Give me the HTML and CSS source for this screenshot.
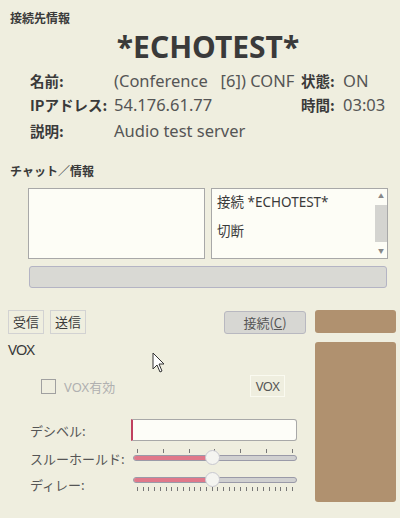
FILE: index.html
```html
<!DOCTYPE html>
<html lang="ja">
<head>
<meta charset="utf-8">
<link rel="stylesheet" href="styles.css">
</head>
<body>
<div class="page">
  <div class="sec-title t1">接続先情報</div>
  <div class="big-title">*ECHOTEST*</div>
  <div class="info">
    <div class="lbl">名前:</div><div class="val pre">(Conference   [6]) CONF</div><div class="lbl">状態:</div><div class="val">ON</div>
    <div class="lbl">IPアドレス:</div><div class="val">54.176.61.77</div><div class="lbl">時間:</div><div class="val">03:03</div>
    <div class="lbl">説明:</div><div class="val">Audio test server</div><div></div><div></div>
  </div>
  <div class="sec-title t2">チャット／情報</div>
  <div class="chat">
    <div class="box"></div>
    <div class="box log">
      <div class="log-text">
        <div class="line1">接続 *ECHOTEST*</div>
        <div class="line2">切断</div>
      </div>
      <div class="scroll">
        <div class="arr">▲</div>
        <div class="thumbbar"></div>
        <div class="arr">▼</div>
      </div>
    </div>
  </div>
  <div class="input-bar"></div>

  <div class="bottom">
    <div class="left">
      <div class="btn-row">
        <div class="tab">受信</div>
        <div class="tab">送信</div>
        <div class="spacer"></div>
        <div class="connect">接続(<u>C</u>)</div>
      </div>
      <div class="vox-title">VOX</div>
      <div class="vox-row">
        <div class="chk"></div>
        <div class="chk-lbl">VOX有効</div>
        <div class="spacer"></div>
        <div class="vox-btn">VOX</div>
      </div>
      <div class="form-row r-db">
        <div class="f-lbl">デシベル:</div>
        <div class="db-input"></div>
      </div>
      <div class="form-row r-th">
        <div class="f-lbl">スルーホールド:</div>
        <div class="slider-wrap">
          <div class="ticks top">
            <i></i><i></i><i></i><i></i><i></i><i></i><i></i>
          </div>
          <div class="slider">
            <div class="fill" style="width:48%"></div>
            <div class="knob" style="left:48%"></div>
          </div>
        </div>
      </div>
      <div class="form-row r-dl">
        <div class="f-lbl">ディレー:</div>
        <div class="slider-wrap">
          <div class="slider">
            <div class="fill" style="width:48%"></div>
            <div class="knob" style="left:48%"></div>
          </div>
          <div class="ticks bottom dense">
            <i></i><i></i><i></i><i></i><i></i><i></i><i></i><i></i><i></i><i></i><i></i><i></i><i></i><i></i><i></i><i></i><i></i><i></i><i></i><i></i><i></i><i></i><i></i><i></i><i></i><i></i><i></i><i></i>
          </div>
        </div>
      </div>
    </div>
    <div class="right">
      <div class="brown small"></div>
      <div class="brown tall"></div>
    </div>
  </div>
  <svg class="cursor" width="14" height="22" viewBox="0 0 14 22"><path d="M1 1 L1 17 L5 13 L8 20 L10 19 L7 12 L12 12 Z" fill="#fff" stroke="#333" stroke-width="1"/></svg>
</div>
</body>
</html>
```
FILE: styles.css
```css
* { box-sizing: border-box; }
html, body { margin: 0; padding: 0; }
body {
  width: 400px;
  height: 518px;
  background: #efeedf;
  font-family: "Noto Sans", "Noto Sans CJK JP", sans-serif;
  color: #3a3a3a;
  overflow: hidden;
}
.page { position: relative; width: 400px; height: 518px; }
.sec-title {
  font-family: "Noto Sans CJK JP", sans-serif;
  font-weight: bold;
  font-size: 12px;
  line-height: 16px;
  padding-left: 10px;
  color: #3a3a3a;
}
.t1 { padding-top: 10px; }
.big-title {
  font-size: 30px;
  font-weight: bold;
  line-height: 36px;
  text-align: center;
  padding-left: 16px;
  margin-top: 3px;
  color: #3a3a3a;
}
.info {
  display: grid;
  grid-template-columns: 84px 187px 42px 1fr;
  grid-template-rows: 24px 26px 26px;
  padding-left: 30px;
  margin-top: 4px;
  font-size: 14px;
  line-height: 24px;
}
.info .lbl { font-weight: bold; font-size: 14.5px; color: #3a3a3a; font-family: "Noto Sans CJK JP", sans-serif; }
.info .val { color: #555; white-space: nowrap; font-size: 16.5px; }
.pre { white-space: pre !important; }
.t2 { margin-top: 18px; }
.chat {
  display: flex;
  gap: 6px;
  margin: 9px 0 0 28px;
  width: 360px;
}
.box {
  width: 177px;
  height: 71px;
  background: #fdfdf6;
  border: 1px solid #a8a8a8;
}
.log { display: flex; }
.log-text {
  flex: 1;
  padding: 4px 0 0 5px;
  font-size: 13.5px;
  line-height: 18px;
  color: #3a3a3a;
}
.line2 { margin-top: 11px; }
.scroll {
  width: 12px;
  display: flex;
  flex-direction: column;
  align-items: center;
  padding: 2px 0;
}
.arr { font-size: 6px; line-height: 10px; color: #888; }
.thumbbar { width: 12px; flex: 1; background: #d4d4d0; margin: 4px 0; }
.input-bar {
  margin: 7px 0 0 29px;
  width: 358px;
  height: 22px;
  background: #d9d9d4;
  border: 1px solid #b4b4c4;
  border-radius: 3px;
}
.bottom {
  display: flex;
  margin-top: 22px;
  padding-left: 8px;
}
.left { width: 298px; display: flex; flex-direction: column; }
.right { margin-left: 9px; display: flex; flex-direction: column; gap: 9px; }
.brown { background: #b0916f; border-radius: 3px; width: 81px; }
.brown.small { height: 23px; }
.brown.tall { height: 160px; }
.btn-row { display: flex; align-items: center; height: 24px; gap: 6px; }
.tab {
  font-family: "Noto Sans CJK JP", sans-serif;
  font-size: 13px;
  line-height: 22px;
  height: 24px;
  padding: 0 4px;
  border: 1px solid #d2d2d2;
  color: #3a3a3a;
}
.spacer { flex: 1; }
.connect {
  width: 82px;
  height: 23px;
  background: #d7d7d3;
  border: 1px solid #b8b8c0;
  border-radius: 3px;
  font-family: "Noto Sans CJK JP", sans-serif;
  font-size: 13px;
  line-height: 21px;
  text-align: center;
  color: #555;
}
.vox-title { font-size: 15px; line-height: 18px; margin-top: 6px; color: #3a3a3a; letter-spacing: -1px; }
.vox-row { display: flex; align-items: center; height: 22px; margin-top: 17px; padding-left: 33px; }
.chk { width: 15px; height: 15px; border: 1px solid #a0a0a0; background: transparent; }
.chk-lbl { margin-left: 8px; font-size: 13px; color: #b0b0b0; font-family: "Noto Sans", "Noto Sans CJK JP", sans-serif; }
.vox-btn {
  margin-right: 21px;
  width: 35px;
  height: 22px;
  border: 1px solid #fafaf0;
  font-size: 13px;
  line-height: 20px;
  text-align: center;
  color: #555;
  letter-spacing: -0.5px;
}
.form-row { display: flex; align-items: center; padding-left: 22px; }
.f-lbl {
  width: 101px;
  font-family: "Noto Sans CJK JP", sans-serif;
  font-size: 13px;
  color: #555;
}
.r-db { margin-top: 22px; height: 22px; }
.db-input {
  width: 166px;
  height: 22px;
  background: #fdfdf8;
  border: 1px solid #a8a8a8;
  border-left: 2px solid #c04060;
  border-radius: 0 3px 3px 0;
}
.r-th { margin-top: 7px; height: 20px; }
.r-dl { margin-top: 6px; height: 20px; }
.slider-wrap { width: 164px; margin-left: 2px; position: relative; }
.slider {
  position: relative;
  height: 6px;
  background: #d0d0d0;
  border: 1px solid #9a9aa8;
  border-radius: 3px;
}
.fill {
  height: 100%;
  background: #e0788a;
  border-radius: 3px 0 0 3px;
}
.knob {
  position: absolute;
  top: -6px;
  width: 15px;
  height: 15px;
  margin-left: -7px;
  border-radius: 50%;
  background: #f4f4f0;
  border: 1px solid #c8c8d0;
}
.ticks { display: flex; justify-content: space-between; padding: 0 4px; }
.ticks i { display: block; width: 1px; background: #777; }
.ticks.top { height: 4px; margin-bottom: 2px; margin-top: -6px; }
.ticks.top i { height: 4px; }
.ticks.bottom { margin-top: 4px; height: 4px; }
.ticks.bottom i { height: 4px; }
.cursor { position: absolute; left: 152px; top: 352px; }
```
